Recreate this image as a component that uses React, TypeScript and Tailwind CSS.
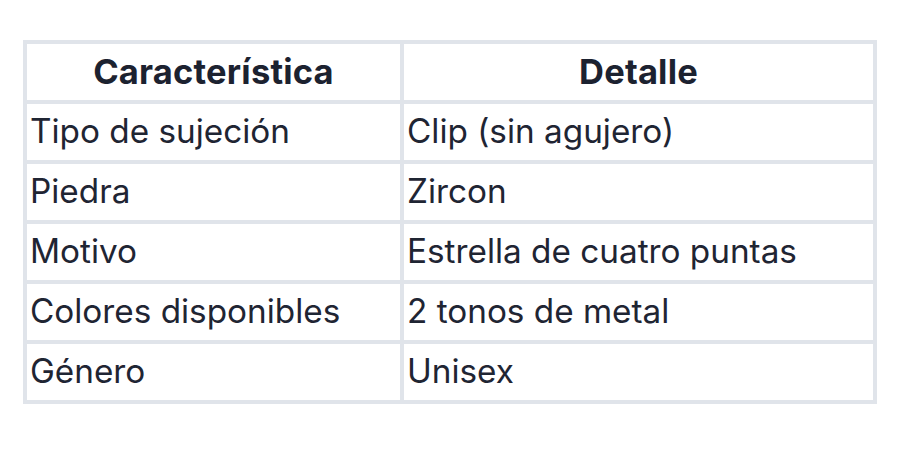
import React from "react";

const rows: [string, string][] = [
  ["Tipo de sujeción", "Clip (sin agujero)"],
  ["Piedra", "Zircon"],
  ["Motivo", "Estrella de cuatro puntas"],
  ["Colores disponibles", "2 tonos de metal"],
  ["Género", "Unisex"],
];

export default function App() {
  return (
    <div
      className="w-[900px] h-[467px] bg-white pt-[40px] pl-[23px]"
      style={{ fontFamily: "Inter, 'Noto Sans', sans-serif" }}
    >
      <div className="grid grid-cols-[373px_469px] gap-[4px] p-[4px] bg-[#e0e4ea] w-[854px]">
        <div className="bg-white h-[56px] flex items-center justify-center text-[34.5px] font-bold tracking-[0.2px] text-[#1c2230]">
          Característica
        </div>
        <div className="bg-white h-[56px] flex items-center justify-center text-[34.5px] font-bold tracking-[0.2px] text-[#1c2230]">
          Detalle
        </div>
        {rows.map(([a, b]) => (
          <React.Fragment key={a}>
            <div className="bg-white h-[56px] flex items-center pl-[3px] text-[33.3px] text-[#1f2533]">
              {a}
            </div>
            <div className="bg-white h-[56px] flex items-center pl-[3px] text-[33.3px] text-[#1f2533]">
              {b}
            </div>
          </React.Fragment>
        ))}
      </div>
    </div>
  );
}
